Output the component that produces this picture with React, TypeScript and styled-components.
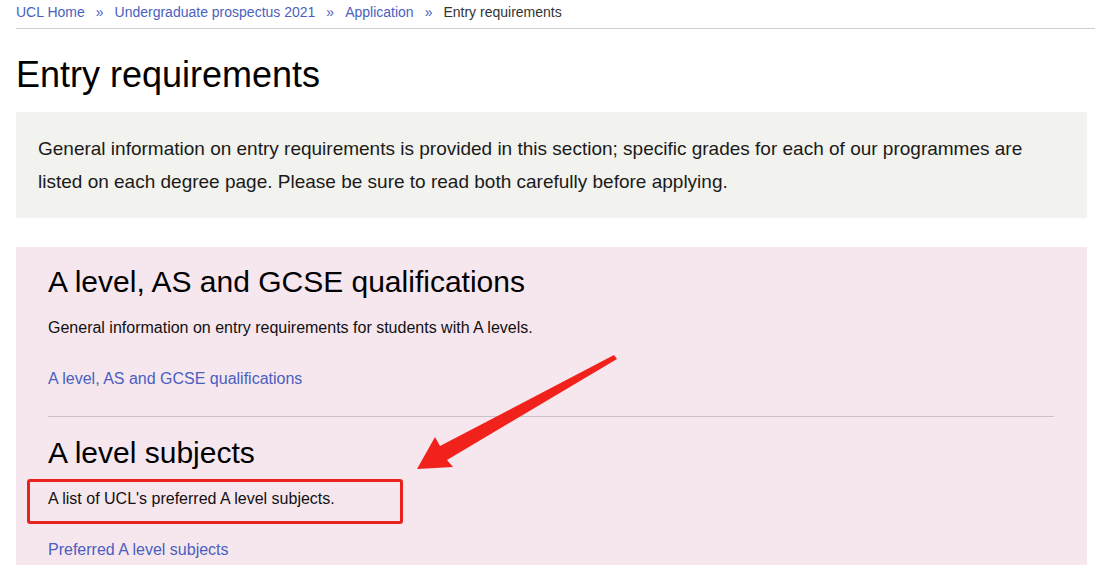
import React from "react";
import styled, { createGlobalStyle } from "styled-components";

const Global = createGlobalStyle`
  html, body { margin: 0; padding: 0; background: #ffffff; }
  body { font-family: "Liberation Sans", Arial, sans-serif; color: #000; }
`;

const Page = styled.div`
  position: relative;
  width: 1100px;
  box-sizing: border-box;
  padding: 0 5px 0 16px;
`;

const Breadcrumb = styled.nav`
  display: flex;
  align-items: center;
  gap: 9px;
  padding: 4px 0 8px;
  font-size: 14px;
  line-height: 16px;
  border-bottom: 1px solid #cccccc;
`;

const Crumb = styled.a<{ $current?: boolean }>`
  color: ${(p) => (p.$current ? "#333333" : "#4a5fbf")};
  text-decoration: none;
`;

const Sep = styled.span`
  color: #4a5fbf;
  font-size: 14px;
  padding: 0 2px;
`;

const Title = styled.h1`
  margin: 24px 0 16px;
  font-size: 36px;
  font-weight: 400;
  line-height: 43px;
`;

const Intro = styled.div`
  margin-right: 8px;
  background: #f2f2ee;
  padding: 20px 47px 20px 22px;
  font-size: 19px;
  line-height: 33px;
  color: #1a1a1a;
`;

const Panel = styled.section`
  margin: 29px 8px 0 0;
  background: #f6e6ee;
  padding: 17px 33px 40px 32px;
`;

const Item = styled.div`
  display: flex;
  flex-direction: column;
`;

const ItemTitle = styled.h2`
  margin: 0;
  font-size: 30px;
  font-weight: 400;
  line-height: 36px;
`;

const ItemText = styled.p`
  margin: 16px 0 0;
  font-size: 16px;
  line-height: 24px;
  color: #111;
`;

const ItemLink = styled.a`
  margin-top: 27px;
  font-size: 16px;
  line-height: 24px;
  color: #4a5fbf;
  text-decoration: none;
`;

const Rule = styled.hr`
  border: 0;
  border-top: 1px solid #cbbfc5;
  margin: 25px 0 18px;
`;

const Highlight = styled.div`
  position: absolute;
  left: 27px;
  top: 479px;
  width: 376px;
  height: 45px;
  box-sizing: border-box;
  border: 3px solid #e8231f;
  border-radius: 3px;
  pointer-events: none;
`;

const Overlay = styled.svg`
  position: absolute;
  left: 0;
  top: 0;
  pointer-events: none;
`;

export default function App() {
  return (
    <>
      <Global />
      <Page>
        <Breadcrumb>
          <Crumb href="#">UCL Home</Crumb>
          <Sep>»</Sep>
          <Crumb href="#">Undergraduate prospectus 2021</Crumb>
          <Sep>»</Sep>
          <Crumb href="#">Application</Crumb>
          <Sep>»</Sep>
          <Crumb $current>Entry requirements</Crumb>
        </Breadcrumb>
        <Title>Entry requirements</Title>
        <Intro>
          General information on entry requirements is provided in this section; specific grades for each of our
          programmes are listed on each degree page. Please be sure to read both carefully before applying.
        </Intro>
        <Panel>
          <Item>
            <ItemTitle>A level, AS and GCSE qualifications</ItemTitle>
            <ItemText>General information on entry requirements for students with A levels.</ItemText>
            <ItemLink href="#">A level, AS and GCSE qualifications</ItemLink>
          </Item>
          <Rule />
          <Item>
            <ItemTitle>A level subjects</ItemTitle>
            <ItemText>A list of UCL's preferred A level subjects.</ItemText>
            <ItemLink href="#">Preferred A level subjects</ItemLink>
          </Item>
        </Panel>
        <Highlight />
        <Overlay width="1100" height="565" viewBox="0 0 1100 565">
          <polygon
            points="614,355 617,359 447,460 453,467 417,469 435,437 440,446"
            fill="#f0221b"
          />
        </Overlay>
      </Page>
    </>
  );
}
